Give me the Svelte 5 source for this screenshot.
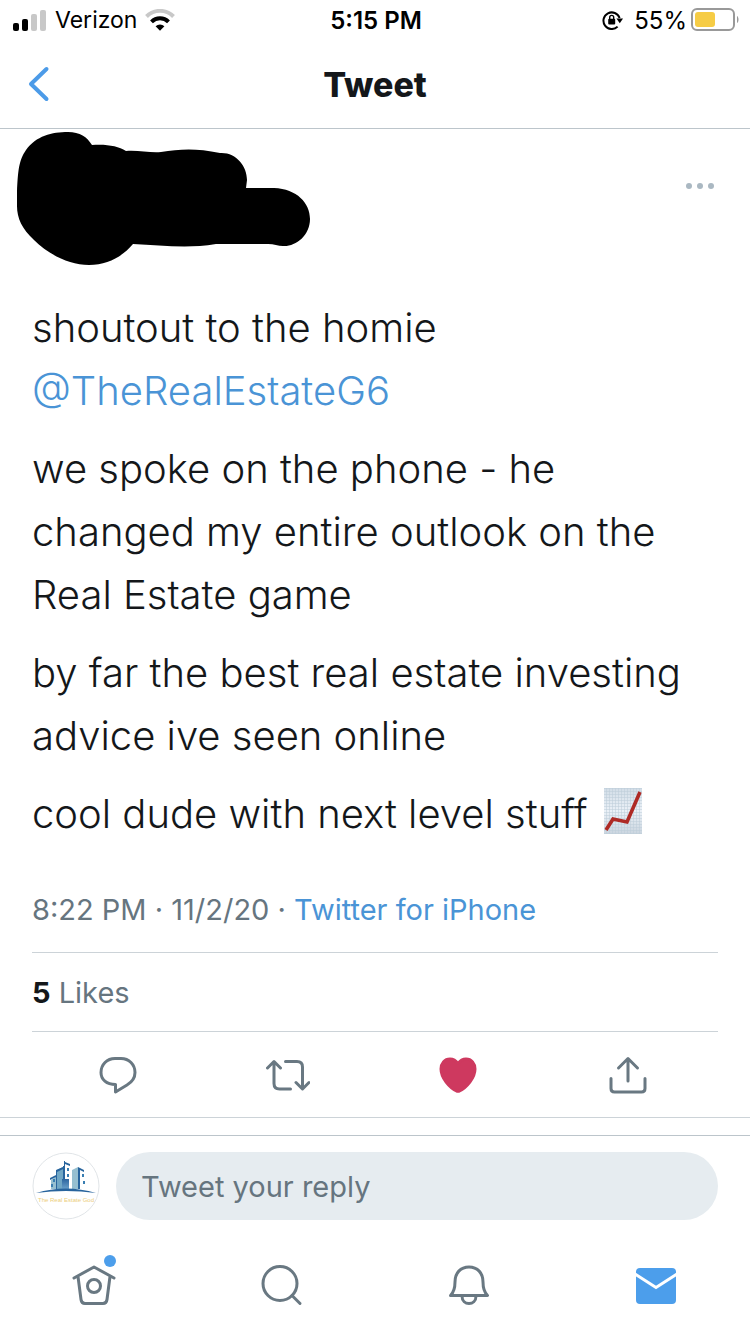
<script lang="ts">
  let reply = $state("");
  let liked = $state(true);

  const paragraphs = [
    "we spoke on the phone - he changed my entire outlook on the Real Estate game",
    "by far the best real estate investing advice ive seen online",
  ];
</script>

<div class="screen">
  <div class="status-bar">
    <div class="carrier">
      <svg width="34" height="22" viewBox="0 0 34 22" aria-hidden="true">
        <rect x="0" y="14" width="6" height="8" rx="2" fill="#000" />
        <rect x="9" y="10" width="6" height="12" rx="2" fill="#000" />
        <rect x="18" y="5" width="6" height="17" rx="2" fill="#c8c8c8" />
        <rect x="27" y="1" width="6" height="21" rx="2" fill="#c8c8c8" />
      </svg>
      <span>Verizon</span>
      <svg width="30" height="22" viewBox="0 0 30 22" aria-hidden="true">
        <path d="M1.5 7.5a19 19 0 0 1 27 0" fill="none" stroke="#c8c8c8" stroke-width="4" />
        <path d="M6.5 12.8a12 12 0 0 1 17 0" fill="none" stroke="#000" stroke-width="4" />
        <path d="M10.6 17.2a6.3 6.3 0 0 1 8.8 0L15 21.7z" fill="#000" />
      </svg>
    </div>
    <time>5:15 PM</time>
    <div class="power">
      <svg class="lock" width="22" height="20" viewBox="0 0 22 20" aria-hidden="true">
        <path d="M15.6 16.600A8.300 8.300 0 1 1 17.600 8" fill="none" stroke="#000" stroke-width="2" />
        <path d="M14.4 8.6h6.6l-3.2 4.6z" fill="#000" />
        <rect x="6.2" y="8.8" width="7" height="5.6" rx="1" fill="#000" />
        <path d="M7.7 9V7.4a2 2 0 0 1 4 0V9" fill="none" stroke="#000" stroke-width="1.4" />
      </svg>
      <span>55%</span>
      <svg width="48" height="24" viewBox="0 0 48 24" aria-hidden="true">
        <rect x="1" y="1" width="42" height="21" rx="5" fill="#fff" stroke="#999" stroke-width="2" />
        <rect x="4" y="4" width="20" height="15" rx="3" fill="#f6cc45" />
        <path d="M46 8c2 1 2 6 0 7z" fill="#999" />
      </svg>
    </div>
  </div>

  <header class="nav-bar">
    <button type="button" class="back" aria-label="Back">
      <svg width="22" height="36" viewBox="0 0 22 36" aria-hidden="true">
        <path d="M18.500 3 3 18l15.500 15" fill="none" stroke="#4c9be8" stroke-width="4" stroke-linecap="round" stroke-linejoin="round" />
      </svg>
    </button>
    <h1>Tweet</h1>
  </header>

  <main>
    <div class="author">
      <svg width="296" height="136" viewBox="0 0 296 136" aria-hidden="true">
        <path d="M1 62C2 40 3 30 10 20 20 6 36 2 52 2 64 2 71 7 76 15 91 14 102 16 110 21 122 20 134 23 145 22 164 19 180 18 204 23 220 22 231 36 231 50L230 58H258C281 59 294 73 294 89 294 106 279 117 267 116 262 116 258 114 252 114H200C170 119 145 115 117 114 107 126 92 135 73 135 53 135 32 124 18 110 6 99 1 88 1 76Z" />
      </svg>
      <button type="button" class="more" aria-label="More">
        <svg width="28" height="8" viewBox="0 0 28 8" fill="#aab8c2" aria-hidden="true">
          <circle cx="3" cy="4" r="3" />
          <circle cx="14" cy="4" r="3" />
          <circle cx="25" cy="4" r="3" />
        </svg>
      </button>
    </div>

    <article>
      <p>shoutout to the homie <a href="#profile">@TheRealEstateG6</a></p>
      {#each paragraphs as paragraph}
        <p>{paragraph}</p>
      {/each}
      <p>
        cool dude with next level stuff
        <svg class="chart" width="40" height="46" viewBox="0 0 40 46" role="img" aria-label="Chart increasing">
          <defs>
            <linearGradient id="paper" x2="0" y2="1">
              <stop offset="0" stop-color="#d2dde7" />
              <stop offset="0.5" stop-color="#ebf1f7" />
              <stop offset="1" stop-color="#cad5df" />
            </linearGradient>
            <pattern id="grid" width="3" height="3" patternUnits="userSpaceOnUse">
              <path d="M0 0H3M0 0V3" stroke="#bccbd8" stroke-width="1" />
            </pattern>
          </defs>
          <rect x="1" width="38" height="46" fill="url(#paper)" />
          <rect x="1" width="38" height="46" fill="url(#grid)" />
          <path d="M3 42 10 31 24 34 37 4" fill="none" stroke="#ae2a25" stroke-width="3.600" />
        </svg>
      </p>
    </article>

    <div class="meta">8:22 PM · 11/2/20 · <a href="#source">Twitter for iPhone</a></div>
    <div class="likes"><strong>5</strong> Likes</div>

    <div class="actions">
      <button type="button" aria-label="Reply">
        <svg class="line" width="44" height="44" viewBox="0 0 44 44" aria-hidden="true">
          <path d="M19.500 31.500C10.500 31.500 5 26.500 5 19.500 5 11.500 11 5.500 19 5.500H25C33 5.500 39 11.500 39 19.500 39 25 36 29 31 32L19.500 39Z" />
        </svg>
      </button>
      <button type="button" aria-label="Retweet">
        <svg class="line" width="44" height="44" viewBox="0 0 44 44" aria-hidden="true">
          <path d="M1.500 15 8 8.500 14.500 15M8 9V30.500Q8 36 13.500 36H24.500M19.500 8.500H31Q36.500 8.500 36.500 14V35.500M30 29.500 36.500 36 43 29.500" />
        </svg>
      </button>
      <button type="button" aria-label="Like" aria-pressed={liked} onclick={() => (liked = !liked)}>
        <svg class:liked class="line" width="44" height="44" viewBox="0 0 44 44" aria-hidden="true">
          <path d="M22 10.500C19.500 7 17 6 14 6 8.500 6 5 10.500 5 16 5 25 13.500 34.500 20.500 38Q22 38.500 23.500 38C30.500 34.500 39 25 39 16 39 10.500 35.500 6 30 6 27 6 24.500 7 22 10.500Z" />
        </svg>
      </button>
      <button type="button" aria-label="Share">
        <svg class="line" width="44" height="44" viewBox="0 0 44 44" aria-hidden="true">
          <path d="M22 28V6M12.500 15 22 5.500 31.500 15M5 25.500V35.500Q5 39 8.500 39H35.500Q39 39 39 35.500V25.500" />
        </svg>
      </button>
    </div>
  </main>

  <form class="reply-bar" onsubmit={(event) => event.preventDefault()}>
    <svg class="avatar" width="68" height="68" viewBox="0 0 68 68" aria-hidden="true">
      <defs>
        <linearGradient id="tower" x2="0" y2="1">
          <stop offset="0" stop-color="#2c659f" />
          <stop offset="1" stop-color="#69a0ca" />
        </linearGradient>
      </defs>
      <circle cx="34" cy="34" r="33" fill="#fff" stroke="#e1e5e8" stroke-width="1" />
      <path d="M19 28 25 24V37H19ZM40 18 46 15V37H40Z" fill="#96bfd0" />
      <path d="M25 18 31 15V37H25Z" fill="#70a7c5" />
      <path d="M32 9H33V37H31V14H32ZM33 10 38 12V14L33 12ZM24 18 31 15V17L25 20V37H24ZM46 15 52 18V20L48 18V37H46ZM18 26 24 23V25L18 28Z" fill="#28649d" />
      <rect x="30" y="27" width="7" height="10" fill="url(#tower)" />
      <path d="M35 16h2v3h-2zM35 22h2v3h-2zM50 22h2v3h-2zM51 29h2v3h-2zM19 32h2v3h-2zM21 27h2v3h-2z" fill="#397eb2" />
      <path d="M4 41Q34 32 64 41 34 37 4 41Z" fill="#28649d" />
      <text x="34" y="50" text-anchor="middle">The Real Estate God</text>
    </svg>
    <input bind:value={reply} placeholder="Tweet your reply" aria-label="Tweet your reply" />
  </form>

  <nav class="tabs" aria-label="Main">
    <a href="#home" aria-label="Home">
      <svg class="line" width="44" height="44" viewBox="0 0 44 44" aria-hidden="true">
        <path d="M2 15 22 4 42 15M6 13.500 9 36.500Q9.500 40.500 13 40.500H31Q34.500 40.500 35 36.500L38 13.500" />
        <circle cx="22" cy="23" r="6.500" />
      </svg>
      <span class="badge"></span>
    </a>
    <a href="#search" aria-label="Search">
      <svg class="line" width="44" height="44" viewBox="0 0 44 44" aria-hidden="true">
        <circle cx="21" cy="20.500" r="17" />
        <path d="M33 32.500 41 40.500" />
      </svg>
    </a>
    <a href="#notifications" aria-label="Notifications">
      <svg class="line" width="44" height="44" viewBox="0 0 44 44" aria-hidden="true">
        <path d="M3.500 32.500C7 29 8 25 8 19 8 10 13.500 4 22 4S36 10 36 19C36 25 37 29 40.500 32.500ZM15 33C15 43 29 43 29 33" />
      </svg>
    </a>
    <a href="#messages" aria-label="Messages">
      <svg width="44" height="44" viewBox="0 0 44 44" aria-hidden="true">
        <rect x="2" y="5" width="40" height="36" rx="4" fill="#4c9eeb" />
        <path d="M1 11 22 24.500 43 11" fill="none" stroke="#fff" stroke-width="3" />
      </svg>
    </a>
  </nav>
</div>

<style>
  :global(body) {
    background: #fff;
  }

  .screen {
    display: flex;
    flex-direction: column;
    min-height: 100vh;
    color: #14171a;
    font-family: Inter, "Liberation Sans", sans-serif;
  }

  svg {
    display: block;
    flex: none;
  }

  button {
    padding: 0;
    border: 0;
    background: none;
    cursor: pointer;
  }

  a {
    color: #4a94d6;
    text-decoration: none;
  }

  .status-bar {
    display: grid;
    grid-template-columns: 1fr auto 1fr;
    align-items: center;
    height: 40px;
    padding: 0 11px 0 13px;
    color: #000;
    font-size: 24px;
  }

  .status-bar time {
    font-weight: 600;
  }

  .carrier,
  .power {
    display: flex;
    align-items: center;
    gap: 8px;
  }

  .carrier {
    font-size: 23px;
  }

  .power {
    justify-content: flex-end;
    gap: 4px;
  }

  .lock {
    margin-right: 6px;
  }

  .nav-bar {
    display: grid;
    grid-template-columns: 1fr auto 1fr;
    align-items: center;
    height: 88px;
    padding: 0 28px;
    border-bottom: 1px solid #bcc5cb;
  }

  .back {
    justify-self: start;
  }

  h1 {
    margin: 0;
    font-size: 34px;
    font-weight: 800;
  }

  .author {
    display: flex;
    justify-content: space-between;
    align-items: flex-start;
    padding: 1px 36px 0 16px;
  }

  .more {
    padding: 52px 0 0;
  }

  article {
    padding: 30px 32px 0;
    font-size: 40px;
    font-weight: 300;
    line-height: 63px;
  }

  p {
    margin: 0 0 15px;
  }

  .chart {
    display: inline-block;
    margin-left: 4px;
    vertical-align: -6px;
  }

  .meta,
  .likes {
    margin: 0 32px;
    border-bottom: 1px solid #ccd3d8;
    color: #66757f;
    font-size: 29px;
  }

  .meta {
    padding: 32px 0 24px;
    line-height: 36px;
  }

  .likes {
    padding: 22px 0 20px;
    line-height: 36px;
  }

  .likes strong {
    color: #14171a;
  }

  .actions {
    display: grid;
    grid-template-columns: repeat(4, 1fr);
    align-items: center;
    height: 85px;
    padding: 0 37px 0 33px;
    border-bottom: 1px solid #ccd3d8;
  }

  .actions button {
    justify-self: center;
  }

  .line {
    fill: none;
    stroke: #697882;
    stroke-width: 3;
    stroke-linecap: round;
    stroke-linejoin: round;
  }

  .liked {
    fill: #ce395f;
    stroke: #ce395f;
  }

  .reply-bar {
    display: flex;
    gap: 16px;
    margin-top: 17px;
    padding: 16px 32px;
    border-top: 1px solid #bcc5cb;
  }

  .avatar text {
    fill: #ecce7c;
    font-family: "Liberation Sans Narrow", "Liberation Sans", sans-serif;
    font-size: 6px;
  }

  .reply-bar input {
    flex: 1;
    min-width: 0;
    height: 68px;
    box-sizing: border-box;
    padding: 0 25px;
    border: 0;
    border-radius: 34px;
    outline: 0;
    background: #e6ecf0;
    color: #14171a;
    font: inherit;
    font-size: 29px;
  }

  .reply-bar input::placeholder {
    color: #66757f;
    opacity: 1;
  }

  .tabs {
    display: grid;
    grid-template-columns: repeat(4, 1fr);
    justify-items: center;
    padding: 27px 0 24px;
  }

  .tabs a {
    position: relative;
  }

  .badge {
    position: absolute;
    top: -8px;
    right: 0;
    width: 12px;
    height: 12px;
    border-radius: 50%;
    background: #4c9eeb;
  }
</style>
